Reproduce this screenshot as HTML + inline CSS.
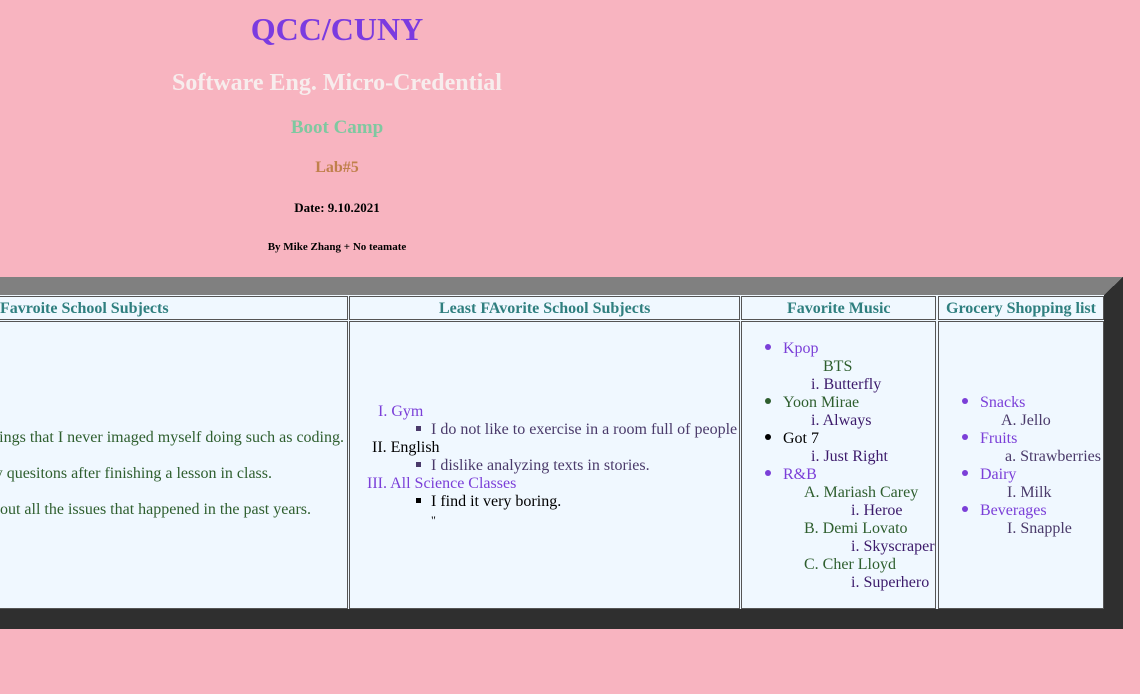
<!DOCTYPE html>
<html><head><meta charset="utf-8"><style>
body{margin:0;width:1140px;height:694px;background:#f8b4c0;font-family:"Liberation Serif","Times New Roman",Times,"DejaVu Serif",serif;position:relative;overflow:hidden}
.a{position:absolute;white-space:nowrap;line-height:18px;font-size:16px}
.c{position:absolute;text-align:center;width:674px;left:0;font-weight:bold;white-space:nowrap}
.cell{position:absolute;background:#f0f8ff;border:1px solid #555;box-sizing:border-box}
.h{position:absolute;font-weight:bold;color:#2f7f7f;font-size:16px;line-height:18px;white-space:nowrap}
.p{color:#7b3fd8}.g{color:#2e5e2e}.d{color:#3c1a6b}.k{color:#000}.s{color:#4a3a6a}
.b{display:inline-block;width:6px;height:6px;border-radius:50%;background:currentColor;vertical-align:3px;margin-right:12px}
.q{display:inline-block;width:5px;height:5px;background:currentColor;vertical-align:3px;margin-right:10px}
</style></head><body>
<div class="c" style="top:11px;font-size:32px;line-height:36px;color:#7b3be0">QCC/CUNY</div>
<div class="c" style="top:69px;font-size:24px;line-height:28px;color:#f7eded">Software Eng. Micro-Credential</div>
<div class="c" style="top:117px;font-size:19px;line-height:22px;color:#7fc8a0">Boot Camp</div>
<div class="c" style="top:159px;font-size:16px;line-height:18px;color:#c0804c">Lab#5</div>
<div class="c" style="top:200px;font-size:13px;line-height:16px;color:#000">Date: 9.10.2021</div>
<div class="c" style="top:240px;font-size:11px;line-height:14px;color:#000">By Mike Zhang + No teamate</div>

<div style="position:absolute;left:-10px;top:277px;width:1133px;height:352px;background:#2f2f2f"></div>
<div style="position:absolute;left:-10px;top:277px;width:1114px;height:18px;background:#808080"></div>
<div style="position:absolute;left:1104px;top:277px;width:19px;height:18px;background:linear-gradient(to bottom right,#808080 50%,#2f2f2f 50%)"></div>
<div style="position:absolute;left:-10px;top:295px;width:1114px;height:314px;background:#f0f8ff"></div>

<div class="cell" style="left:-10px;top:296px;width:358px;height:24px"></div>
<div class="cell" style="left:349px;top:296px;width:391px;height:24px"></div>
<div class="cell" style="left:741px;top:296px;width:195px;height:24px"></div>
<div class="cell" style="left:938px;top:296px;width:166px;height:24px"></div>
<div class="cell" style="left:-10px;top:321px;width:358px;height:288px"></div>
<div class="cell" style="left:349px;top:321px;width:391px;height:288px"></div>
<div class="cell" style="left:741px;top:321px;width:195px;height:288px"></div>
<div class="cell" style="left:938px;top:321px;width:166px;height:288px"></div>

<div class="h" style="left:0;top:300px">Favroite School Subjects</div>
<div class="h" style="left:439px;top:300px">Least FAvorite School Subjects</div>
<div class="h" style="left:787px;top:300px">Favorite Music</div>
<div class="h" style="left:946px;top:300px">Grocery Shopping list</div>

<div class="a g" style="right:796px;top:429px">things that I never imaged myself doing such as coding.</div>
<div class="a g" style="right:868px;top:465px">y quesitons after finishing a lesson in class.</div>
<div class="a g" style="right:829px;top:501px">bout all the issues that happened in the past years.</div>

<div class="a p" style="left:378px;top:403px">I. Gym</div>
<div class="a s" style="left:416px;top:421px"><span class="q"></span>I do not like to exercise in a room full of people</div>
<div class="a k" style="left:372px;top:439px">II. English</div>
<div class="a s" style="left:416px;top:457px"><span class="q"></span>I dislike analyzing texts in stories.</div>
<div class="a p" style="left:367px;top:475px">III. All Science Classes</div>
<div class="a k" style="left:416px;top:493px"><span class="q"></span>I find it very boring.</div>
<div class="a k" style="left:431px;top:511px;font-size:12px">"</div>

<div class="a p" style="left:765px;top:340px"><span class="b"></span>Kpop</div>
<div class="a g" style="left:823px;top:358px">BTS</div>
<div class="a d" style="left:811px;top:376px">i. Butterfly</div>
<div class="a g" style="left:765px;top:394px"><span class="b"></span>Yoon Mirae</div>
<div class="a d" style="left:811px;top:412px">i. Always</div>
<div class="a k" style="left:765px;top:430px"><span class="b"></span>Got 7</div>
<div class="a d" style="left:811px;top:448px">i. Just Right</div>
<div class="a p" style="left:765px;top:466px"><span class="b"></span>R&amp;B</div>
<div class="a g" style="left:804px;top:484px">A. Mariash Carey</div>
<div class="a d" style="left:851px;top:502px">i. Heroe</div>
<div class="a g" style="left:804px;top:520px">B. Demi Lovato</div>
<div class="a d" style="left:851px;top:538px">i. Skyscraper</div>
<div class="a g" style="left:804px;top:556px">C. Cher Lloyd</div>
<div class="a d" style="left:851px;top:574px">i. Superhero</div>

<div class="a p" style="left:962px;top:394px"><span class="b"></span>Snacks</div>
<div class="a s" style="left:1001px;top:412px">A. Jello</div>
<div class="a p" style="left:962px;top:430px"><span class="b"></span>Fruits</div>
<div class="a s" style="left:1005px;top:448px">a. Strawberries</div>
<div class="a p" style="left:962px;top:466px"><span class="b"></span>Dairy</div>
<div class="a s" style="left:1007px;top:484px">I. Milk</div>
<div class="a p" style="left:962px;top:502px"><span class="b"></span>Beverages</div>
<div class="a s" style="left:1007px;top:520px">I. Snapple</div>
</body></html>
